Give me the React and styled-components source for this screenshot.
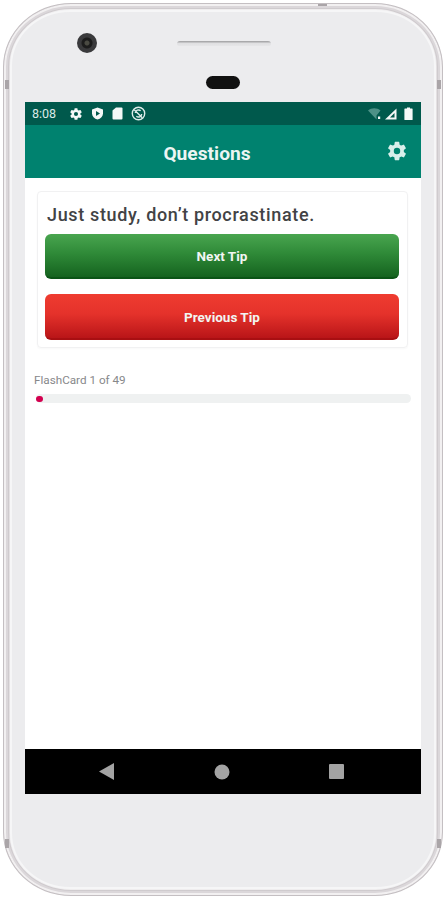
import React from "react";
import styled, { createGlobalStyle } from "styled-components";

const Global = createGlobalStyle`
  html, body { margin: 0; padding: 0; background: #fff; }
  body { font-family: Roboto, "Liberation Sans", sans-serif; width: 448px; height: 900px; overflow: hidden; }
`;

const Page = styled.div`
  width: 448px;
  height: 900px;
  box-sizing: border-box;
  padding: 3px 5px 4px 3px;
`;

const Phone = styled.div`
  height: 893px;
  box-sizing: border-box;
  position: relative;
  border-radius: 68px / 64px;
  background: linear-gradient(90deg, #dcd7da, #efedee 3%, #efedee 97%, #dcd7da);
  border: 1px solid #c4bfc2;
  box-shadow: inset 0 0 0 2px #f2f0f1, inset 0 0 0 4px #dbd7da, inset 0 0 0 5px #cfcbce;
  padding: 6px;
  display: flex;
`;

const Band = styled.div`
  position: absolute;
  background: #aaa5a8;
  ${p => p.$side === "left" && "left: 1px;"}
  ${p => p.$side === "right" && "right: 1px;"}
  ${p => p.$side !== "top" && `top: ${p.$at}px; width: 4px; height: 9px;`}
  ${p => p.$side === "top" && `top: 0; left: ${p.$at}px; width: 9px; height: 2px;`}
`;

const Bezel = styled.div`
  flex: 1;
  border-radius: 60px / 56px;
  background: #ececee;
  box-shadow: inset 0 0 0 2px #f6f6f7;
  padding: 0 15px;
  display: flex;
  flex-direction: column;
`;

const Top = styled.div`
  height: 92px;
  flex: none;
  position: relative;
`;

const Camera = styled.div`
  position: absolute;
  left: 52px;
  top: 23px;
  width: 20px;
  height: 20px;
  border-radius: 50%;
  background: radial-gradient(circle, #4a4a42 0 2px, #1c1c1c 3px 5px, #3a3a3c 6px 10px);
`;

const Speaker = styled.div`
  position: absolute;
  left: 152px;
  top: 31px;
  width: 94px;
  height: 5px;
  border-radius: 3px 3px 2px 2px;
  background: linear-gradient(#a9a9ab 0 1px, #dfdfe1 2px, #e6e6e8);
`;

const Sensor = styled.div`
  position: absolute;
  left: 181px;
  top: 66px;
  width: 34px;
  height: 13px;
  border-radius: 7px;
  background: #111;
`;

const Screen = styled.div`
  flex: none;
  height: 692px;
  background: #fff;
  display: flex;
  flex-direction: column;
  color: #fff;
`;

const StatusBar = styled.div`
  height: 23px;
  flex: none;
  background: #00594c;
  padding: 0 8px 0 7px;
  display: flex;
  align-items: center;
  justify-content: space-between;
`;

const StatusGroup = styled.div`
  display: flex;
  align-items: center;
  gap: ${p => p.$gap || 0}px;
`;

const Clock = styled.span`
  font-size: 12.5px;
  color: #dcebe8;
  margin-right: 2px;
  width: 27px;
`;

const BatteryGap = styled.span`
  width: 3px;
`;

const AppBar = styled.div`
  height: 53px;
  flex: none;
  background: #00826f;
  display: flex;
  align-items: center;
  justify-content: center;
  position: relative;
`;

const Title = styled.div`
  font-size: 19.2px;
  font-weight: 700;
  color: #ebf5f3;
  margin: 3px 32px 0 0;
`;

const SettingsBtn = styled.div`
  position: absolute;
  right: 13px;
  top: 15px;
  display: flex;
`;

const Content = styled.div`
  flex: 1;
  padding: 13px 10px 0 9px;
  display: flex;
  flex-direction: column;
`;

const Card = styled.div`
  margin: 0 3px;
  height: 157px;
  box-sizing: border-box;
  border: 1px solid #f1f1f2;
  border-radius: 4px;
  padding: 0 8px 0 7px;
  display: flex;
  flex-direction: column;
  box-shadow: 0 1px 2px rgba(0,0,0,.03);
`;

const Tip = styled.div`
  font-size: 18px;
  font-weight: 500;
  letter-spacing: .65px;
  color: #424345;
  height: 42px;
  line-height: 46px;
  padding-left: 2px;
  white-space: nowrap;
`;

const TipButton = styled.div`
  height: ${p => (p.$tone === "green" ? 45 : 46)}px;
  flex: none;
  box-sizing: border-box;
  border-radius: 6px;
  margin-bottom: 15px;
  padding-top: 1px;
  display: flex;
  align-items: center;
  justify-content: center;
  font-size: 13.5px;
  font-weight: 700;
  color: #f2f5f2;
  background: ${p => p.$tone === "green"
    ? "linear-gradient(#49a54f, #2f8a38 45%, #15631f)"
    : "linear-gradient(#ef3c30, #e5322b 45%, #b91518)"};
  border-bottom: 2px solid ${p => p.$tone === "green" ? "#0b5416" : "#a80f12"};
`;

const Progress = styled.div`
  margin-top: 24px;
`;

const ProgressLabel = styled.div`
  font-size: 11.7px;
  line-height: 16px;
  color: #87888a;
`;

const Track = styled.div`
  margin: 6px 0 0 2px;
  height: 9px;
  border-radius: 5px;
  background: #eff1f1;
  display: flex;
  align-items: center;
`;

const Dot = styled.div`
  width: 7px;
  height: 6px;
  border-radius: 3px;
  background: #d3004f;
`;

const NavBar = styled.div`
  height: 45px;
  flex: none;
  background: #000;
  display: grid;
  grid-template-columns: 164px 66px 1fr;
  align-items: center;
  justify-items: center;
`;

const NavSlot = styled.div`
  display: flex;
  justify-self: ${p => p.$align || "center"};
  margin: ${p => p.$margin || 0};
`;

const Gear = ({ size, color }) => (
  <svg width={size} height={size} viewBox="0 0 24 24" fill={color}>
    <path fillRule="evenodd" d="M19.43 12.98c.04-.32.07-.64.07-.98s-.03-.66-.07-.98l2.11-1.65a.5.5 0 0 0 .12-.64l-2-3.46a.5.5 0 0 0-.61-.22l-2.49 1a7.3 7.3 0 0 0-1.69-.98l-.38-2.65A.49.49 0 0 0 14 2h-4a.49.49 0 0 0-.49.42l-.38 2.65c-.61.25-1.17.59-1.69.98l-2.49-1a.5.5 0 0 0-.61.22l-2 3.46a.5.5 0 0 0 .12.64l2.11 1.65c-.04.32-.07.65-.07.98s.03.66.07.98l-2.11 1.65a.5.5 0 0 0-.12.64l2 3.46c.12.22.39.3.61.22l2.49-1c.52.4 1.08.73 1.69.98l.38 2.65c.03.24.24.42.49.42h4c.25 0 .46-.18.49-.42l.38-2.65a7.7 7.7 0 0 0 1.69-.98l2.49 1c.23.09.49 0 .61-.22l2-3.46a.5.5 0 0 0-.12-.64l-2.11-1.65zM12 15.5a3.5 3.5 0 1 1 0-7 3.5 3.5 0 0 1 0 7z" />
  </svg>
);

const Shield = () => (
  <svg width="13" height="13" viewBox="0 0 13 13">
    <path d="M6.5 .5 12 2.4v4c0 3-2.3 5.2-5.500 6.100C3.300 11.600 1 9.400 1 6.400v-4z" fill="#f4f8f7" />
    <path d="M5 4v5l4-2.500z" fill="#00594c" />
  </svg>
);

const SdCard = () => (
  <svg width="11" height="13" viewBox="0 0 11 13">
    <path d="M4 .5h5.500a1 1 0 0 1 1 1v10a1 1 0 0 1-1 1h-8a1 1 0 0 1-1-1V3.500z" fill="#f4f8f7" />
  </svg>
);

const NoSync = () => (
  <svg width="15" height="15" viewBox="0 0 14 14" fill="none" stroke="#dfecea" strokeWidth="1.300">
    <circle cx="7" cy="7" r="5.800" />
    <path d="M3 3.500 10.500 11M4 6.500A3 3 0 0 1 9 4.500M10 7.500A3 3 0 0 1 5 9.500" />
  </svg>
);

const Wifi = () => (
  <svg width="14" height="12" viewBox="0 0 14 12">
    <path d="M0 2.500C3.500 -.5 9 -.5 12.500 2.500L8.500 7.500V11.500z" fill="#4d9187" />
    <rect x="10" y="8.500" width="2.200" height="2.500" fill="#f4f8f7" />
  </svg>
);

const Signal = () => (
  <svg width="13" height="12" viewBox="0 0 13 12">
    <path d="M12.500 .5V11.500H1z" fill="#f4f8f7" />
    <path d="M10.500 5V9.500H6z" fill="#00594c" />
  </svg>
);

const Battery = () => (
  <svg width="9" height="13" viewBox="0 0 9 13">
    <path d="M3 .5h3v1h2a.6.6 0 0 1 .6.6v10.300a.6.6 0 0 1-.6.6H1a.6.6 0 0 1-.6-.6V2.100a.6.6 0 0 1 .6-.6h2z" fill="#f6f9f8" />
  </svg>
);

export default function App() {
  return (
    <Page>
      <Global />
      <Phone>
        <Band $side="left" $at={76} />
        <Band $side="left" $at={835} />
        <Band $side="right" $at={76} />
        <Band $side="right" $at={835} />
        <Band $side="top" $at={314} />
        <Bezel>
          <Top>
            <Camera />
            <Speaker />
            <Sensor />
          </Top>
          <Screen>
            <StatusBar>
              <StatusGroup $gap={8}>
                <Clock>8:08</Clock>
                <Gear size={14} color="#f4f8f7" />
                <Shield />
                <SdCard />
                <NoSync />
              </StatusGroup>
              <StatusGroup $gap={2}>
                <Wifi />
                <Signal />
                <BatteryGap />
                <Battery />
              </StatusGroup>
            </StatusBar>
            <AppBar>
              <Title>Questions</Title>
              <SettingsBtn>
                <Gear size={22} color="#d9efeb" />
              </SettingsBtn>
            </AppBar>
            <Content>
              <Card>
                <Tip>Just study, don’t procrastinate.</Tip>
                <TipButton $tone="green">Next Tip</TipButton>
                <TipButton $tone="red">Previous Tip</TipButton>
              </Card>
              <Progress>
                <ProgressLabel>FlashCard 1 of 49</ProgressLabel>
                <Track>
                  <Dot />
                </Track>
              </Progress>
            </Content>
            <NavBar>
              <NavSlot>
                <svg width="16" height="17" viewBox="0 0 16 17"><path d="M15 0v17L0 8.500z" fill="#a3a3a3" /></svg>
              </NavSlot>
              <NavSlot>
                <svg width="16" height="16" viewBox="0 0 16 16"><circle cx="8" cy="8" r="7.500" fill="#a3a3a3" /></svg>
              </NavSlot>
              <NavSlot $align="start" $margin="0 0 0 74px">
                <svg width="16" height="16" viewBox="0 0 16 16"><rect width="15" height="15" rx="1" fill="#a3a3a3" /></svg>
              </NavSlot>
            </NavBar>
          </Screen>
        </Bezel>
      </Phone>
    </Page>
  );
}
